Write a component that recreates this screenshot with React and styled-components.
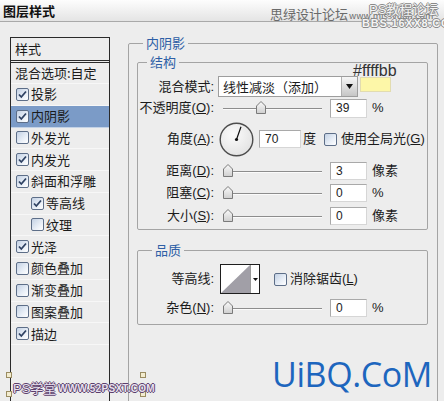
import React from 'react';
import styled, { createGlobalStyle } from 'styled-components';

const Global = createGlobalStyle`
  html, body { margin: 0; padding: 0; background: #ededed; overflow: hidden; }
  body {
    font-family: "Liberation Sans", "Noto Sans CJK SC", sans-serif;
    font-size: 13px;
    color: #1b1b1b;
  }
`;

const Page = styled.div`
  width: 444px;
  height: 401px;
  position: relative;
  overflow: hidden;
  background: #ededed;
`;

const TitleBar = styled.div`
  height: 21px;
  border-bottom: 1px solid #a9a9a9;
  background: linear-gradient(#fdfdfd, #e4e4e4);
  display: flex;
  align-items: center;
  padding-left: 3px;
`;

const Title = styled.div`
  font-family: "Noto Sans CJK SC", sans-serif;
  font-weight: bold;
  font-size: 13px;
  line-height: 16px;
  color: #111;
`;

const MarkGray = styled.div`
  position: absolute;
  left: ${p => p.x}px;
  top: ${p => p.y}px;
  font-size: ${p => p.size}px;
  line-height: 1;
  color: #6a6a6a;
  white-space: nowrap;
  font-family: "Noto Sans CJK SC", sans-serif;
`;

const MarkOutline = styled.div`
  position: absolute;
  left: ${p => p.x}px;
  top: ${p => p.y}px;
  font-size: ${p => p.size}px;
  font-weight: ${p => (p.bold ? 'bold' : 'normal')};
  letter-spacing: ${p => p.ls || 0}px;
  line-height: 1;
  white-space: nowrap;
  color: ${p => p.fill};
  font-family: ${p => (p.narrow ? '"Liberation Sans Narrow", "Liberation Sans"' : '"Liberation Sans"')}, "Noto Sans CJK SC", sans-serif;
  text-shadow:
    1px 0 0 ${p => p.stroke}, -1px 0 0 ${p => p.stroke},
    0 1px 0 ${p => p.stroke}, 0 -1px 0 ${p => p.stroke};
`;

const Main = styled.div`
  display: flex;
  height: 379px;
  overflow: hidden;
`;

const Sidebar = styled.div`
  margin: 15px 0 0 10px;
  width: 100px;
  height: 420px;
  flex-shrink: 0;
  box-sizing: border-box;
  border: 1px solid #2a2a2a;
  border-bottom: none;
`;

const SideHeader = styled.div`
  height: 22px;
  line-height: 22px;
  padding-left: 4px;
  border-bottom: 3px double #2a2a2a;
  font-family: "Noto Sans CJK SC", sans-serif;
`;

const SideItem = styled.div`
  height: ${p => p.h}px;
  box-sizing: border-box;
  display: flex;
  align-items: center;
  gap: 2px;
  padding-left: ${p => p.indent}px;
  background: ${p => (p.active ? '#7b9bc7' : 'transparent')};
  border-bottom: 1px solid rgba(255, 255, 255, 0.55);
  line-height: 16px;
  white-space: nowrap;
  font-family: "Noto Sans CJK SC", sans-serif;
`;

const Box = styled.span`
  width: 13px;
  height: 13px;
  box-sizing: border-box;
  flex-shrink: 0;
  border: 1px solid #5d6e88;
  border-radius: 2px;
  background: linear-gradient(135deg, #c3d1e4 0%, #e9eff7 60%, #ffffff 100%);
  display: inline-flex;
  align-items: center;
  justify-content: center;
  margin-left: ${p => p.ml || 0}px;
`;

const Check = ({ checked, ml }) => (
  <Box ml={ml}>
    {checked && (
      <svg width="11" height="11" viewBox="0 0 11 11">
        <path d="M2 5.5 L4.3 8 L9 2.5" fill="none" stroke="#2f4263" strokeWidth="1.8" />
      </svg>
    )}
  </Box>
);

const Content = styled.div`
  margin: 13px 0 0 18px;
`;

const Group = styled.fieldset`
  margin: ${p => p.mt || 0}px 0 0 0;
  border: 1px solid #a4a4a4;
  border-radius: 2px;
  padding: ${p => p.pt}px ${p => p.pr}px ${p => p.pb}px ${p => p.pl}px;
  min-width: 0;
  box-sizing: border-box;
  width: ${p => (p.w ? `${p.w}px` : 'auto')};
  height: ${p => (p.h ? `${p.h}px` : 'auto')};
`;

const Legend = styled.legend`
  padding: 0 3px;
  margin-left: ${p => p.ml}px;
  color: #2e5fa6;
  font-size: 13px;
  line-height: 16px;
  font-family: "Noto Sans CJK SC", sans-serif;
`;

const Row = styled.div`
  display: flex;
  align-items: center;
  height: ${p => p.h}px;
`;

const Label = styled.div`
  width: 76px;
  flex-shrink: 0;
  text-align: right;
  white-space: nowrap;
  line-height: 16px;
  & u { text-decoration: underline; }
`;

const Select = styled.div`
  margin-left: 4px;
  width: 140px;
  height: 21px;
  box-sizing: border-box;
  display: flex;
  border: 1px solid #9d9d9d;
  background: #fff;
  align-self: flex-start;
`;

const SelectText = styled.div`
  flex: 1;
  padding-left: 4px;
  line-height: 19px;
  font-family: "Noto Sans CJK SC", sans-serif;
  white-space: nowrap;
`;

const SelectBtn = styled.div`
  width: 15px;
  border-left: 1px solid #b0b0b0;
  background: linear-gradient(#f6f6f6, #c6c6c6);
  display: flex;
  align-items: center;
  justify-content: center;
`;

const Swatch = styled.div`
  margin: 1px 0 0 2px;
  align-self: flex-start;
  width: 31px;
  height: 15px;
  box-sizing: border-box;
  border: 1px solid #e2dcb0;
  background: #fdf7a8;
`;

const HexNote = styled.div`
  position: absolute;
  left: 353px;
  top: 63px;
  font-family: "Liberation Sans", sans-serif;
  font-size: 16px;
  line-height: 16px;
  color: #333;
`;

const Track = styled.div`
  position: relative;
  margin-left: 9px;
  width: 99px;
  height: 20px;
  flex-shrink: 0;
  &::before {
    content: '';
    position: absolute;
    left: 0;
    right: 0;
    top: 10px;
    height: 1px;
    background: #8d8d8d;
    box-shadow: 0 1px 0 #fbfbfb;
  }
`;

const Thumb = styled.svg`
  position: absolute;
  top: 3px;
  left: ${p => p.pos}px;
`;

const Slider = ({ pos }) => (
  <Track>
    <Thumb pos={pos} width="10" height="13" viewBox="0 0 10 13">
      <defs>
        <linearGradient id="tg" x1="0" y1="0" x2="0" y2="1">
          <stop offset="0" stopColor="#fafafa" />
          <stop offset="1" stopColor="#cfcfcf" />
        </linearGradient>
      </defs>
      <polygon points="0.5,5 5,0.5 9.5,5 9.5,12.5 0.5,12.5" fill="url(#tg)" stroke="#7a7a7a" />
    </Thumb>
  </Track>
);

const Input = styled.div`
  margin-left: ${p => p.ml}px;
  width: ${p => p.w}px;
  height: ${p => p.h}px;
  box-sizing: border-box;
  flex-shrink: 0;
  border: 1px solid #a9a9a9;
  border-right-color: #d6d6d6;
  border-bottom-color: #d6d6d6;
  background: #fff;
  padding-left: 5px;
  display: flex;
  align-items: center;
  font-size: 12px;
  color: #222;
`;

const Unit = styled.span`
  margin-left: ${p => p.ml}px;
  white-space: nowrap;
  line-height: 16px;
`;

const DialWrap = styled.svg`
  margin-left: 5px;
  flex-shrink: 0;
`;

const Dial = () => (
  <DialWrap width="35" height="35" viewBox="0 0 35 35">
    <defs>
      <radialGradient id="dg" cx="0.4" cy="0.35" r="0.7">
        <stop offset="0" stopColor="#fbfbfb" />
        <stop offset="1" stopColor="#e2e2e2" />
      </radialGradient>
    </defs>
    <circle cx="17.5" cy="17.5" r="16.3" fill="url(#dg)" stroke="#4d4d4d" strokeWidth="1.4" />
    <line x1="17.5" y1="17.5" x2="22" y2="4.8" stroke="#111" strokeWidth="1.2" />
    <circle cx="17.5" cy="17.5" r="1.6" fill="#111" />
  </DialWrap>
);

const CheckText = styled.span`
  margin-left: ${p => p.ml}px;
  white-space: nowrap;
  line-height: 16px;
`;

const Contour = styled.div`
  margin-left: 6px;
  width: 40px;
  height: 30px;
  box-sizing: border-box;
  border: 1px solid #1e1e1e;
  display: flex;
  background: #fff;
`;

const ContourDrop = styled.div`
  flex: 1;
  border-left: 1px solid #9a9a9a;
  display: flex;
  align-items: center;
  justify-content: center;
`;

const Brand = styled.div`
  position: absolute;
  left: 272px;
  top: 357px;
  font-family: "Open Sans", sans-serif;
  font-size: 34px;
  line-height: 34px;
  letter-spacing: -0.4px;
  color: #1d66be;
`;

const Corner = styled.span`
  position: absolute;
  left: ${p => p.x}px;
  top: ${p => p.y}px;
  width: 4px;
  height: 4px;
  border: 1px solid #9a8c62;
  background: #f3eccf;
`;

const sideItems = [
  { t: '投影', c: true },
  { t: '内阴影', c: true, active: true },
  { t: '外发光', c: false },
  { t: '内发光', c: true },
  { t: '斜面和浮雕', c: true },
  { t: '等高线', c: true, sub: true },
  { t: '纹理', c: false, sub: true },
  { t: '光泽', c: true },
  { t: '颜色叠加', c: false },
  { t: '渐变叠加', c: false },
  { t: '图案叠加', c: false },
  { t: '描边', c: true },
];

const Arrow = ({ w = 7, h = 4 }) => (
  <svg width={w} height={h} viewBox={`0 0 ${w} ${h}`}>
    <polygon points={`0,0 ${w},0 ${w / 2},${h}`} fill="#111" />
  </svg>
);

export default function App() {
  return (
    <Page>
      <Global />
      <TitleBar>
        <Title>图层样式</Title>
      </TitleBar>
      <Main>
        <Sidebar>
          <SideHeader>样式</SideHeader>
          <SideItem h={21} indent={4}>混合选项:自定</SideItem>
          {sideItems.map(it => (
            <SideItem key={it.t} h={21.75} indent={it.sub ? 20 : 5} active={it.active}>
              <Check checked={it.c} />
              <span>{it.t}</span>
            </SideItem>
          ))}
        </Sidebar>
        <Content>
          <Group w={310} h={420} pt={3} pr={9} pb={0} pl={8}>
            <Legend ml={6}>内阴影</Legend>
            <Group pt={6} pr={0} pb={1} pl={0}>
              <Legend ml={9}>结构</Legend>
              <Row h={22}>
                <Label>混合模式:</Label>
                <Select>
                  <SelectText>线性减淡（添加）</SelectText>
                  <SelectBtn><Arrow w={7} h={5} /></SelectBtn>
                </Select>
                <Swatch />
              </Row>
              <Row h={20}>
                <Label>不透明度(<u>O</u>):</Label>
                <Slider pos={33} />
                <Input ml={8} w={37} h={19}>39</Input>
                <Unit ml={5}>%</Unit>
              </Row>
              <Row h={42}>
                <Label>角度(<u>A</u>):</Label>
                <Dial />
                <Input ml={5} w={42} h={18}>70</Input>
                <Unit ml={2}>度</Unit>
                <Check ml={8} checked={false} />
                <CheckText ml={4}>使用全局光(<u>G</u>)</CheckText>
              </Row>
              <Row h={22}>
                <Label>距离(<u>D</u>):</Label>
                <Slider pos={0} />
                <Input ml={8} w={37} h={18}>3</Input>
                <Unit ml={5}>像素</Unit>
              </Row>
              <Row h={22}>
                <Label>阻塞(<u>C</u>):</Label>
                <Slider pos={0} />
                <Input ml={8} w={37} h={18}>0</Input>
                <Unit ml={5}>%</Unit>
              </Row>
              <Row h={24}>
                <Label>大小(<u>S</u>):</Label>
                <Slider pos={0} />
                <Input ml={8} w={37} h={18}>0</Input>
                <Unit ml={5}>像素</Unit>
              </Row>
            </Group>
            <Group mt={12} pt={2} pr={0} pb={6} pl={0}>
              <Legend ml={14}>品质</Legend>
              <Row h={38}>
                <Label>等高线:</Label>
                <Contour>
                  <svg width="29" height="28" viewBox="0 0 29 28">
                    <polygon points="0,28 29,0 29,28" fill="#a19fa7" />
                  </svg>
                  <ContourDrop><Arrow w={5} h={3} /></ContourDrop>
                </Contour>
                <Check ml={14} checked={false} />
                <CheckText ml={3}>消除锯齿(<u>L</u>)</CheckText>
              </Row>
              <Row h={20}>
                <Label>杂色(<u>N</u>):</Label>
                <Slider pos={0} />
                <Input ml={8} w={37} h={18}>0</Input>
                <Unit ml={5}>%</Unit>
              </Row>
            </Group>
          </Group>
        </Content>
      </Main>
      <MarkGray x={270} y={7} size={13}>思绿设计论坛</MarkGray>
      <MarkGray x={349} y={11} size={9}>www.missyuan.com</MarkGray>
      <MarkOutline x={369} y={3} size={13} fill="#f4f4f4" stroke="#8a8a8a">PS教程论坛</MarkOutline>
      <MarkOutline x={362} y={18} size={11} narrow bold ls={0.8} fill="#f4f4f4" stroke="#8a8a8a">BBS.16XX8.COM</MarkOutline>
      <HexNote>#ffffbb</HexNote>
      <Brand>UiBQ.CoM</Brand>
      <Corner x={6} y={372} />
      <Corner x={6} y={391} />
      <Corner x={140} y={372} />
      <Corner x={140} y={391} />
      <MarkOutline x={13} y={382} size={13} fill="#e9e2f0" stroke="#5b3f6c">PS学堂</MarkOutline>
      <MarkOutline x={58} y={384} size={10} bold ls={0.3} fill="#e9e2f0" stroke="#5b3f6c">WWW.52PSXT.COM</MarkOutline>
    </Page>
  );
}
